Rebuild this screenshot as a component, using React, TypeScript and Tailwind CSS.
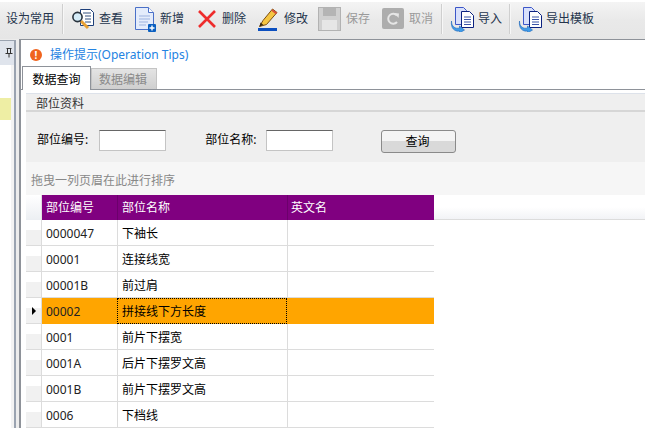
import * as React from 'react'

const rows = [
  ['0000047', '下袖长'],
  ['00001', '连接线宽'],
  ['00001B', '前过肩'],
  ['00002', '拼接线下方长度'],
  ['0001', '前片下摆宽'],
  ['0001A', '后片下摆罗文高'],
  ['0001B', '前片下摆罗文高'],
  ['0006', '下档线'],
]

function ViewIcon() {
  return (
    <svg width="24" height="26" viewBox="0 0 24 26">
      <path d="M8.5 3.5h10l3 3v13h-13z" fill="#fff" stroke="#1d3f7a" />
      <path d="M11 7h8M13 10h6M13 13h6M13 16h6" stroke="#33517f" />
      <path d="M9 15l7 7" stroke="#e8a033" strokeWidth="3" />
      <circle cx="5.5" cy="11" r="4.6" fill="#d5ecf8" stroke="#28323c" strokeWidth="1.6" />
    </svg>
  )
}

function NewIcon() {
  return (
    <svg width="24" height="26" viewBox="0 0 24 26">
      <path d="M1.5 1.5h13l5 5v17h-18z" fill="#e4ecfb" stroke="#4a70c8" />
      <path d="M14.5 1.5v5h5" fill="#fff" stroke="#4a70c8" />
      <path d="M5 10h11M5 13h11M5 16h9M5 19h7" stroke="#9db3e0" />
      <rect x="14" y="18" width="8" height="8" rx="1" fill="#0a5fc0" />
      <path d="M18 19.5v5M15.5 22h5" stroke="#fff" strokeWidth="1.4" />
    </svg>
  )
}

function DeleteIcon() {
  return (
    <svg width="20" height="20" viewBox="0 0 20 20">
      <path d="M2 2l16 16M18 2L2 18" stroke="#ee2c2c" strokeWidth="2.6" />
    </svg>
  )
}

function EditIcon() {
  return (
    <svg width="20" height="24" viewBox="0 0 20 24">
      <path d="M5 13.5L14.5 2l4.5 3.5L8.5 17.5 1.5 19.5z" fill="#f5c542" stroke="#7a4d12" />
      <path d="M14 3l4.5 3.5" stroke="#d8503a" strokeWidth="2" />
      <path d="M1.5 19.5l1-4 3 2.5z" fill="#3a2a14" />
      <rect x="0" y="21" width="19" height="3" fill="#0b4fc0" />
    </svg>
  )
}

function SaveIcon() {
  return (
    <svg width="23" height="24" viewBox="0 0 23 24">
      <rect x="0.5" y="0.5" width="22" height="23" fill="#d0d0d0" stroke="#b2b2b2" />
      <rect x="5" y="1" width="13" height="8" fill="#b4b4b4" />
      <rect x="4" y="13" width="15" height="10" fill="#e6e6e6" />
    </svg>
  )
}

function RedoIcon() {
  return (
    <svg width="22" height="21" viewBox="0 0 22 21">
      <rect width="22" height="21" rx="2" fill="#adadad" />
      <path d="M15 7.5a5 5 0 1 0 0 6.5" fill="none" stroke="#e6e6e6" strokeWidth="2" />
      <path d="M12.5 5l4.5 .5-.5 4.5z" fill="#e6e6e6" />
    </svg>
  )
}

function ImportIcon() {
  return (
    <svg width="25" height="26" viewBox="0 0 25 26">
      <path d="M5.5 1.5h8l3 3v14h-11z" fill="#d8e0fb" stroke="#3c56c8" />
      <path d="M11.5 5.5h8l4 4v12h-12z" fill="#fff" stroke="#0c2280" />
      <path d="M14 11h7M14 13.5h7M14 16h7M14 18.5h7" stroke="#3c56a8" />
      <path d="M1.5 15c0 6 4 8 8 7v-2l5 4-5 3v-2c-5 1-9-3-8-10z" fill="#3f9be8" stroke="#1e66b8" strokeWidth="0.6" />
    </svg>
  )
}

function Pin() {
  return (
    <svg width="8" height="10" viewBox="0 0 8 10">
      <path d="M1.5 0.5h5M2.5 0.5v4.5M5.5 0.5v4.5M0.5 5.5h7M4 5.5v4" fill="none" stroke="#333" />
    </svg>
  )
}

function Sep() {
  return <div className="h-[30px] w-[2px] border-l border-[#cfcfcf] bg-[#f7f7f7]" />
}

export default function App() {
  return (
    <div className="flex h-[428px] w-[645px] flex-col overflow-hidden bg-[#ececec] text-[12px] leading-[16px] text-black [font-family:'Noto_Sans','Noto_Sans_CJK_SC',sans-serif]">
      <div className="flex h-[39px] items-center whitespace-nowrap border-t-2 border-white bg-gradient-to-b from-[#f4f4f4] via-[#e9e9e9] to-[#e6e6e6] pb-[4px] text-[#24344c]">
        <span className="ml-[6px] w-[48px] shrink-0">设为常用</span>
        <div className="ml-[8px]"><Sep /></div>
        <div className="ml-[8px] flex items-center gap-[1px]"><ViewIcon /><span className="ml-[2px]">查看</span></div>
        <div className="ml-[11px] flex items-center gap-[2px]"><NewIcon /><span>新增</span></div>
        <div className="ml-[13px] flex items-center gap-[5px]"><DeleteIcon /><span>删除</span></div>
        <div className="ml-[12px] flex items-center gap-[6px]"><EditIcon /><span>修改</span></div>
        <div className="ml-[10px] flex items-center gap-[5px] text-[#9a9a9a]"><SaveIcon /><span>保存</span></div>
        <div className="ml-[12px] flex items-center gap-[5px] text-[#9a9a9a]"><RedoIcon /><span>取消</span></div>
        <div className="ml-[8px]"><Sep /></div>
        <div className="ml-[7px] flex items-center gap-[3px]"><ImportIcon /><span>导入</span></div>
        <div className="ml-[7px]"><Sep /></div>
        <div className="ml-[7px] flex items-center gap-[3px]"><ImportIcon /><span>导出模板</span></div>
      </div>

      <div className="flex min-h-0 flex-1">
        <div className="mt-[1px] flex w-[16px] flex-col border-t border-r-2 border-[#9aa3b0] bg-[#f3f3f3]">
          <div className="flex h-[24px] items-center justify-end bg-[#dfe4ec] pr-[1px]"><Pin /></div>
          <div className="h-[33px] w-[11px] bg-white" />
          <div className="h-[22px] w-[11px] bg-[#eeeea4]" />
          <div className="w-[11px] flex-1 bg-white" />
        </div>

        <div className="ml-[3px] flex min-w-0 flex-1 flex-col border-t border-l-2 border-[#8e9299] bg-white">
          <div className="flex h-[26px] items-center pl-[9px] pt-[3px] text-[#2383e2]">
            <span className="flex h-[12px] w-[12px] items-center justify-center rounded-full bg-[#f0641e] text-[10px] font-bold leading-none text-white">!</span>
            <span className="ml-[8px]">操作提示(Operation Tips)</span>
          </div>

          <div className="flex h-[24px] items-end border-b border-[#8e9299] pl-[1px]">
            <div className="z-10 -mb-[1px] flex h-[24px] w-[69px] items-center justify-center border border-b-0 border-[#8e9299] bg-white pt-[2px]">数据查询</div>
            <div className="flex h-[21px] w-[66px] items-center justify-center border border-b-0 border-[#c4c4c4] bg-gradient-to-b from-[#e4e4e4] to-[#cfcfcf] pr-[2px] pt-[1px] text-[#8a8a8a]">数据编辑</div>
          </div>

          <div className="ml-[5px] flex min-h-0 flex-1 flex-col border-t-[3px] border-t-white bg-[#efefef]">
            <div className="h-[19px] border-t border-[#dde2ea] border-b-2 border-b-[#d6d6d6] pl-[10px] pt-[2px] leading-[15px] text-[#333]">部位资料</div>

            <div className="flex h-[50px] items-start pl-[11px] pt-[18px]">
              <span className="pt-[2px]">部位编号:</span>
              <div className="ml-[11px] h-[21px] w-[67px] border border-[#c4c4c4] border-t-[#666] bg-white" />
              <span className="ml-[39px] pt-[2px]">部位名称:</span>
              <div className="ml-[10px] h-[21px] w-[67px] border border-[#c4c4c4] border-t-[#666] bg-white" />
              <button className="ml-[48px] h-[23px] w-[75px] rounded-[3px] border border-[#8a8a8a] bg-gradient-to-b from-[#f4f4f4] from-50% to-[#d9d9d9] to-50% pr-[3px]">查询</button>
            </div>

            <div className="flex h-[34px] items-start bg-[#f6f6f6] pl-[5px] pt-[11px] text-[#888]">拖曳一列页眉在此进行排序</div>

            <div className="flex h-[25px] bg-white">
              <div className="w-[16px] border-r border-[#e0e0e0] bg-gradient-to-b from-white to-[#eceff3]" />
              <div className="flex w-[392px] bg-[#800080] text-white">
                <div className="w-[76px] border-r border-[#6c006c] pl-[4px] pt-[5px]">部位编号</div>
                <div className="w-[170px] border-r border-[#6c006c] pl-[4px] pt-[5px]">部位名称</div>
                <div className="flex-1 pl-[3px] pt-[5px]">英文名</div>
              </div>
              <div className="flex-1 border-b border-[#dcdcdc] bg-gradient-to-b from-white from-50% to-[#f2f3f6]" />
            </div>

            <div className="flex-1 bg-white">
              {rows.map(([code, name], i) => {
                const on = i === 3
                return (
                  <div key={code} className="flex h-[26px]">
                    <div className="flex w-[16px] items-center justify-center border-r border-b border-[#dcdcdc] bg-gradient-to-b from-white from-40% to-[#f1f1f1] to-40%">
                      {on && <div className="h-0 w-0 border-y-[4px] border-l-[4px] border-y-transparent border-l-black" />}
                    </div>
                    <div className={on ? 'flex w-[392px] bg-[#ffa500]' : 'flex w-[392px] border-b border-[#dcdcdc]'}>
                      <div className={on ? 'flex w-[75px] items-center pl-[4px] pt-[2px] text-[#222]' : 'flex w-[76px] items-center border-r border-[#dcdcdc] pl-[4px] pt-[2px] text-[#222]'}>{code}</div>
                      <div className={on ? 'flex w-[170px] items-center border border-dotted border-black pl-[4px] pt-[2px]' : 'flex w-[170px] items-center border-r border-[#dcdcdc] pl-[4px] pt-[2px]'}>{name}</div>
                      <div className="flex-1" />
                    </div>
                  </div>
                )
              })}
            </div>
          </div>
        </div>
      </div>
    </div>
  )
}
